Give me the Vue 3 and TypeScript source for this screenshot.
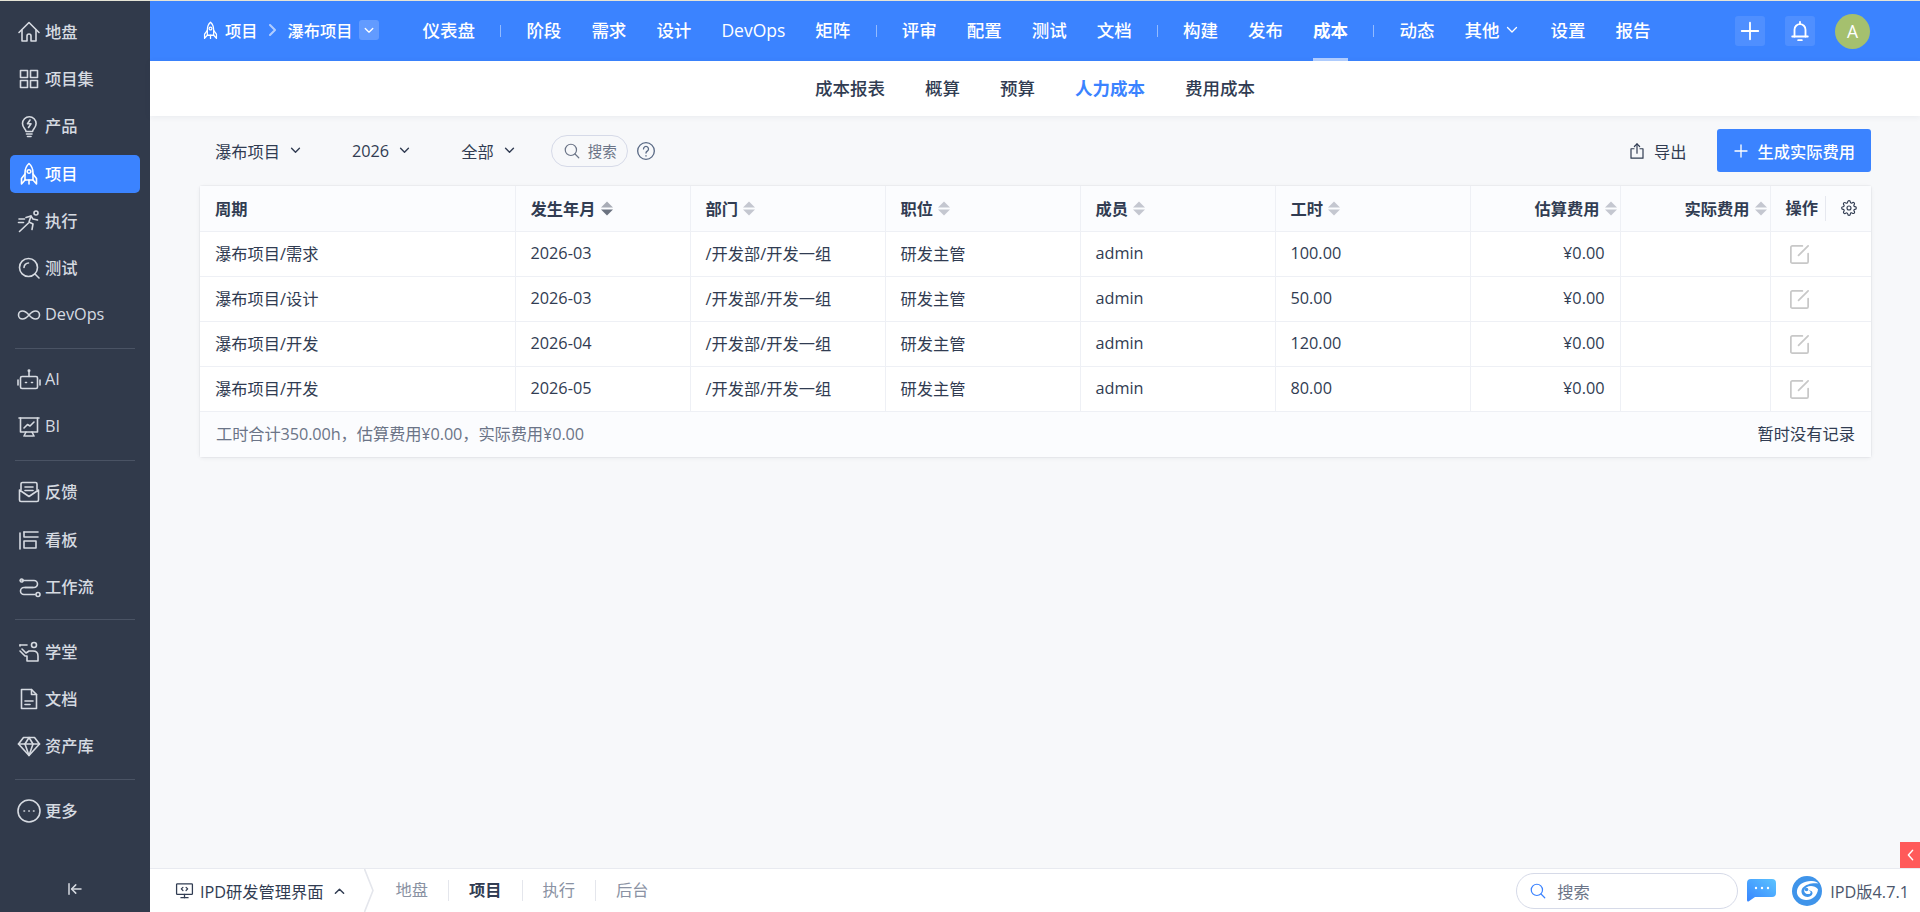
<script setup lang="ts">
interface SideItem {
  label: string
  icon: string
  active?: boolean
}

const icons: Record<string, string[]> = {
  home: ['M2 12.5 12 2.5l10 10', 'M5 10v11h5v-5a2 2 0 0 1 4 0v5h5V10'],
  apps: ['M3.5 3.5h7v7h-7z', 'M13.5 3.5h7v7h-7z', 'M3.5 13.5h7v7h-7z', 'M13.5 13.5h7v7h-7z'],
  bulb: ['M9 17.5c0-2.5-3.5-3.5-3.5-8a6.8 6.8 0 0 1 13.6 0c0 4.5-3.5 5.5-3.5 8z', 'M9.5 20h5.5', 'M10.5 22.5H14', 'M13 6l-2.5 3.8H14l-2.5 3.7'],
  rocket: ['M12 1.5c2.5 2.2 4 5.5 4 9.5v7H8v-7c0-4 1.500-7.300 4-9.500z', 'M8 12l-3.500 4.500V22L8 18', 'M16 12l3.500 4.500V22L16 18', 'M13.800 9.500a1.800 1.800 0 1 1-3.600 0 1.800 1.800 0 0 1 3.600 0z', 'M12 18v4'],
  run: ['M21 4a2 2 0 1 1-4 0 2 2 0 0 1 4 0z', 'M9 8.500l5-1.500 2 3 4.500 1', 'M14 7l-2 6 4 2-1 5.500', 'M11.500 14 2.500 22.500', 'M2 10h5.500', 'M1.500 13.500h5'],
  test: ['M20.500 11.500a9 9 0 1 1-18 0 9 9 0 0 1 18 0z', 'M18 18l4 4', 'M7 11.500a4.500 4.500 0 0 1 4.500-4.500'],
  loop: ['M12 12c-2.500-3-4.500-4-6.500-4a4 4 0 0 0 0 8c2 0 4-1 6.500-4s4.500-4 6.500-4a4 4 0 0 1 0 8c-2 0-4-1-6.500-4z'],
  robot: ['M5 8.500h14a1.500 1.500 0 0 1 1.500 1.500v9a1.500 1.500 0 0 1-1.500 1.500H5A1.500 1.500 0 0 1 3.500 19v-9A1.500 1.500 0 0 1 5 8.500z', 'M12 8.500V4', 'M1 12v5', 'M23 12v5', 'M8.500 14.500h1', 'M14.500 14.500h1', 'M12.700 2.800a.7.7 0 1 1-1.400 0 .7.7 0 0 1 1.400 0z'],
  chart: ['M2 3h20', 'M3.500 3v14h17V3', 'M7 21l2-4', 'M17 21l-2-4', 'M7 13l3.500-3.500 2.500 1.500 4-4', 'M8 21h8'],
  mail: ['M4 9.500V4a1.500 1.500 0 0 1 1.500-1.500h13A1.500 1.500 0 0 1 20 4v5.500', 'M2.500 10v10a1.500 1.500 0 0 0 1.500 1.500h16a1.500 1.500 0 0 0 1.500-1.500V10L12 16.500z', 'M8 7h8', 'M8 10.500h8'],
  board: ['M3 5v16', 'M7 4h14', 'M7 4v5h14', 'M7 13h12v7H7z'],
  flow: ['M5 5.500h12a3.500 3.500 0 0 1 0 7H7a3.500 3.500 0 0 0 0 7h11', 'M3.500 4.500a1.500 1.500 0 1 1 0 2 1.500 1.500 0 0 1 0-2z', 'M8 12.500h8', 'M23 19.500a2 2 0 1 1-4 0 2 2 0 0 1 4 0z'],
  teach: ['M19.500 5a2.500 2.500 0 1 1-5 0 2.500 2.500 0 0 1 5 0z', 'M3 5h7', 'M3 11l5 5h2v5h11v-5c0-3-2-5-5-5h-4l-3 2-4-4', 'M3 5v1'],
  doc: ['M4.500 2.500h10l5 5v14h-15z', 'M14.500 2.500v5h5', 'M8 14h8', 'M8 17.500h5'],
  gem: ['M6.500 3.500h11l5 6.500L12 21.500 1.500 10z', 'M1.500 10h21', 'M8 10l4 11.500L16 10', 'M8 10l4-6.500 4 6.500'],
  more: ['M23 12a11 11 0 1 1-22 0 11 11 0 0 1 22 0z', 'M7 12h.5', 'M11.800 12h.5', 'M16.500 12h.5'],
  search: ['M18 10.500a7.500 7.500 0 1 1-15 0 7.500 7.500 0 0 1 15 0z', 'M16 16l5 5'],
  monitor: ['M3 3.500h18a1 1 0 0 1 1 1V16a1 1 0 0 1-1 1H3a1 1 0 0 1-1-1V4.500a1 1 0 0 1 1-1z', 'M12 17v4', 'M7.500 21h9', 'M10 8l-2 2 2 2', 'M14 8l2 2-2 2'],
  bell: ['M6 18V10.500a6 6 0 0 1 12 0V18', 'M3.500 18h17', 'M10 22h4', 'M12 2v2.500'],
  share: ['M8 9H4v12.500h16V9h-4', 'M12 15V2.500', 'M8.500 6 12 2.500 15.500 6'],
  edit: ['M21 11v8.500a1.500 1.500 0 0 1-1.500 1.500h-15A1.500 1.500 0 0 1 3 19.500v-15A1.500 1.500 0 0 1 4.500 3H15', 'M11 13 21 3'],
  gear: ['M19.400 15a1.650 1.650 0 0 0 .33 1.820l.06.06a2 2 0 0 1 0 2.830 2 2 0 0 1-2.830 0l-.06-.06a1.650 1.650 0 0 0-1.820-.33 1.650 1.650 0 0 0-1 1.510V21a2 2 0 0 1-2 2 2 2 0 0 1-2-2v-.09A1.650 1.650 0 0 0 9 19.400a1.650 1.650 0 0 0-1.820.33l-.06.06a2 2 0 0 1-2.830 0 2 2 0 0 1 0-2.830l.06-.06a1.650 1.650 0 0 0 .33-1.820 1.650 1.650 0 0 0-1.510-1H3a2 2 0 0 1-2-2 2 2 0 0 1 2-2h.09A1.650 1.650 0 0 0 4.600 9a1.650 1.650 0 0 0-.33-1.820l-.06-.06a2 2 0 0 1 0-2.830 2 2 0 0 1 2.830 0l.06.06a1.650 1.650 0 0 0 1.820.33H9a1.650 1.650 0 0 0 1-1.510V3a2 2 0 0 1 2-2 2 2 0 0 1 2 2v.09a1.650 1.650 0 0 0 1 1.510 1.650 1.650 0 0 0 1.820-.33l.06-.06a2 2 0 0 1 2.830 0 2 2 0 0 1 0 2.830l-.06.06a1.650 1.650 0 0 0-.33 1.820V9a1.650 1.650 0 0 0 1.510 1H21a2 2 0 0 1 2 2 2 2 0 0 1-2 2h-.09a1.650 1.650 0 0 0-1.510 1z', 'M15 12a3 3 0 1 1-6 0 3 3 0 0 1 6 0z'],
  help: ['M22 12a10 10 0 1 1-20 0 10 10 0 0 1 20 0z', 'M9 9.500a3 3 0 1 1 4.500 2.600c-1 .6-1.500 1.200-1.500 2.400', 'M12 17.500v.5'],
  collapse: ['M4 5v14', 'M20 12H8', 'M13 6.500 7.500 12l5.500 5.500']
}

const sideGroups: SideItem[][] = [
  [
    { label: '地盘', icon: 'home' },
    { label: '项目集', icon: 'apps' },
    { label: '产品', icon: 'bulb' },
    { label: '项目', icon: 'rocket', active: true },
    { label: '执行', icon: 'run' },
    { label: '测试', icon: 'test' },
    { label: 'DevOps', icon: 'loop' }
  ],
  [
    { label: 'AI', icon: 'robot' },
    { label: 'BI', icon: 'chart' }
  ],
  [
    { label: '反馈', icon: 'mail' },
    { label: '看板', icon: 'board' },
    { label: '工作流', icon: 'flow' }
  ],
  [
    { label: '学堂', icon: 'teach' },
    { label: '文档', icon: 'doc' },
    { label: '资产库', icon: 'gem' }
  ],
  [{ label: '更多', icon: 'more' }]
]

const navGroups = [
  ['仪表盘'],
  ['阶段', '需求', '设计', 'DevOps', '矩阵'],
  ['评审', '配置', '测试', '文档'],
  ['构建', '发布', '成本'],
  ['动态']
]

const subNav = ['成本报表', '概算', '预算', '人力成本', '费用成本']

const columns = [
  { title: '周期', width: 315, sort: false },
  { title: '发生年月', width: 175, sort: true, current: true },
  { title: '部门', width: 195, sort: true },
  { title: '职位', width: 195, sort: true },
  { title: '成员', width: 195, sort: true },
  { title: '工时', width: 195, sort: true },
  { title: '估算费用', width: 150, sort: true, right: true },
  { title: '实际费用', width: 150, sort: true, right: true }
]

const rows = [
  { period: '瀑布项目/需求', month: '2026-03', hours: '100.00' },
  { period: '瀑布项目/设计', month: '2026-03', hours: '50.00' },
  { period: '瀑布项目/开发', month: '2026-04', hours: '120.00' },
  { period: '瀑布项目/开发', month: '2026-05', hours: '80.00' }
]

const filters = ['瀑布项目', '2026', '全部']
const bottomTabs = ['地盘', '项目', '执行', '后台']
</script>

<template>
  <div class="page">
    <div class="top-strip"></div>
    <div class="shell">
      <aside class="sidebar">
        <template v-for="(group, g) in sideGroups" :key="g">
          <div v-if="g > 0" class="side-sep"></div>
          <div class="side-group">
            <a v-for="item in group" :key="item.label" class="side-item" :class="{ active: item.active }">
              <svg class="side-icon" viewBox="0 0 24 24">
                <path v-for="d in icons[item.icon]" :key="d" :d="d" />
              </svg>
              <span>{{ item.label }}</span>
            </a>
          </div>
        </template>
        <div class="side-collapse">
          <svg class="collapse-icon" viewBox="0 0 24 24">
            <path v-for="d in icons.collapse" :key="d" :d="d" />
          </svg>
        </div>
      </aside>

      <div class="main">
        <header class="header">
          <div class="crumb">
            <svg class="crumb-rocket" viewBox="0 0 24 24">
              <path v-for="d in icons.rocket" :key="d" :d="d" />
            </svg>
            <span class="crumb-root">项目</span>
            <svg class="crumb-arrow" viewBox="0 0 10 14"><path d="M2 2l5 5-5 5" /></svg>
            <span>瀑布项目</span>
            <span class="crumb-drop">
              <svg viewBox="0 0 12 8"><path d="M1.500 1.500 6 6l4.500-4.500" /></svg>
            </span>
          </div>
          <nav class="nav">
            <template v-for="(group, g) in navGroups" :key="g">
              <i v-if="g > 0" class="nav-sep"></i>
              <a v-for="label in group" :key="label" class="nav-item" :class="{ active: label === '成本' }">{{ label }}</a>
            </template>
            <a class="nav-item nav-more">
              其他
              <svg viewBox="0 0 12 8"><path d="M1.500 1.500 6 6l4.500-4.500" /></svg>
            </a>
            <a class="nav-item">设置</a>
            <a class="nav-item">报告</a>
          </nav>
          <div class="header-tools">
            <span class="tool-box">
              <svg viewBox="0 0 24 24"><path d="M12 3v18M3 12h18" /></svg>
            </span>
            <span class="tool-box">
              <svg viewBox="0 0 24 24"><path v-for="d in icons.bell" :key="d" :d="d" /></svg>
            </span>
            <span class="avatar">A</span>
          </div>
        </header>

        <div class="subnav">
          <a v-for="label in subNav" :key="label" class="subnav-item" :class="{ active: label === '人力成本' }">{{ label }}</a>
        </div>

        <main class="content">
          <div class="toolbar">
            <a v-for="label in filters" :key="label" class="filter">
              {{ label }}
              <svg viewBox="0 0 12 8"><path d="M1.500 1.500 6 6l4.500-4.500" /></svg>
            </a>
            <div class="search-pill">
              <svg viewBox="0 0 24 24"><path v-for="d in icons.search" :key="d" :d="d" /></svg>
              <span>搜索</span>
            </div>
            <svg class="help" viewBox="0 0 24 24"><path v-for="d in icons.help" :key="d" :d="d" /></svg>
            <a class="export">
              <svg viewBox="0 0 24 24"><path v-for="d in icons.share" :key="d" :d="d" /></svg>
              导出
            </a>
            <button class="primary" type="button">
              <svg viewBox="0 0 24 24"><path d="M12 3v18M3 12h18" /></svg>
              生成实际费用
            </button>
          </div>

          <div class="card">
            <table class="grid">
              <colgroup>
                <col v-for="c in columns" :key="c.title" :style="{ width: c.width + 'px' }" />
                <col />
              </colgroup>
              <thead>
                <tr>
                  <th v-for="c in columns" :key="c.title" :class="{ right: c.right }">
                    <span class="th-inner">
                      {{ c.title }}
                      <svg v-if="c.sort" class="sort" :class="{ current: c.current }" viewBox="0 0 12 15">
                        <path class="up" d="M6 0.500 12 6.500H0z" />
                        <path class="down" d="M0 8.500h12l-6 6z" />
                      </svg>
                    </span>
                  </th>
                  <th class="actions-head">
                    <span class="actions-inner">
                      <span class="actions-title">操作</span>
                      <svg viewBox="0 0 24 24"><path v-for="d in icons.gear" :key="d" :d="d" /></svg>
                    </span>
                  </th>
                </tr>
              </thead>
              <tbody>
                <tr v-for="(r, i) in rows" :key="i">
                  <td>{{ r.period }}</td>
                  <td>{{ r.month }}</td>
                  <td>/开发部/开发一组</td>
                  <td>研发主管</td>
                  <td>admin</td>
                  <td>{{ r.hours }}</td>
                  <td class="right">¥0.00</td>
                  <td class="right"></td>
                  <td class="action-cell">
                    <svg viewBox="0 0 24 24"><path v-for="d in icons.edit" :key="d" :d="d" /></svg>
                  </td>
                </tr>
              </tbody>
            </table>
            <div class="card-foot">
              <span class="summary">工时合计350.00h，估算费用¥0.00，实际费用¥0.00</span>
              <span>暂时没有记录</span>
            </div>
          </div>
        </main>

        <footer class="bottom">
          <div class="bottom-menu">
            <svg viewBox="0 0 24 24"><path v-for="d in icons.monitor" :key="d" :d="d" /></svg>
            <span>IPD研发管理界面</span>
            <svg class="bottom-chevron" viewBox="0 0 12 8"><path d="M1.500 6.500 6 2l4.500 4.500" /></svg>
          </div>
          <svg class="bottom-wedge" viewBox="0 0 10 43"><path d="M0.500 0 9 21.500 0.500 43" /></svg>
          <div class="bottom-tabs">
            <a v-for="t in bottomTabs" :key="t" class="bottom-tab" :class="{ active: t === '项目' }">{{ t }}</a>
          </div>
          <div class="bottom-right">
            <div class="bottom-search">
              <svg viewBox="0 0 24 24"><path v-for="d in icons.search" :key="d" :d="d" /></svg>
              <span>搜索</span>
            </div>
            <svg class="chat" viewBox="0 0 29 23">
              <defs>
                <linearGradient id="chatFill" x1="0" y1="1" x2="1" y2="0">
                  <stop offset="0" stop-color="#3785ff" />
                  <stop offset="1" stop-color="#5cc4ff" />
                </linearGradient>
              </defs>
              <path d="M4 0h21a4 4 0 0 1 4 4v10a4 4 0 0 1-4 4H8L1.500 22.500Q0 23 0 21V4a4 4 0 0 1 4-4z" fill="url(#chatFill)" />
              <circle cx="9" cy="9" r="1.200" fill="#fff" />
              <circle cx="15" cy="9" r="1.200" fill="#fff" />
              <circle cx="21" cy="9" r="1.200" fill="#fff" />
            </svg>
            <svg class="logo" viewBox="0 0 30 30">
              <circle cx="15" cy="15" r="15" fill="#3f94ea" />
              <path d="M5 14.500C6 8 13 4.500 20 5c3 .2 5 1.200 6.500 2.500C22 6.500 14 7.500 10.500 12c-2 3-1 7 2.500 8.500 3 1.200 7-.2 7.500-3 .3-2-2-3.500-4-2.800 1.800 0 2.500 1.200 2 2.200-.8 1.500-3.500 1.500-5 .3-2-1.500-1.500-4.500 1-6 3.500-2 8.500-1.500 11.500 2-.5 6.500-6 11-12 10.800C9 24 4 20 5 14.500z" fill="#fff" />
              <circle cx="14.500" cy="13.500" r="1.800" fill="#3f94ea" />
            </svg>
            <span class="version">IPD版4.7.1</span>
          </div>
        </footer>
      </div>
    </div>
    <div class="red-tab">
      <svg viewBox="0 0 8 14"><path d="M6.500 1.500 1.500 7l5 5.500" /></svg>
    </div>
  </div>
</template>

<style scoped>
.page {
  position: relative;
  display: flex;
  flex-direction: column;
  height: 100vh;
  overflow: hidden;
  font-family: "Open Sans", "Noto Sans CJK SC", sans-serif;
  font-size: 16.25px;
  color: #313c52;
}

svg {
  display: block;
  flex: none;
  fill: none;
  stroke: currentColor;
  stroke-width: 1.6;
  stroke-linecap: round;
  stroke-linejoin: round;
}

a {
  cursor: pointer;
}

.top-strip {
  height: 1px;
  flex: none;
  background: #e6e4d6;
}

.shell {
  display: flex;
  flex: 1;
  min-height: 0;
}

/* left rail */
.sidebar {
  width: 150px;
  flex: none;
  display: flex;
  flex-direction: column;
  padding-top: 12px;
  background: #313a4b;
  color: #d6dae1;
}

.side-group {
  display: flex;
  flex-direction: column;
  gap: 9.2px;
  padding: 0 10px;
}

.side-sep {
  height: 1px;
  flex: none;
  margin: 13.5px 15px 12.5px;
  background: #4a5364;
}

.side-item {
  display: flex;
  align-items: center;
  height: 38px;
  flex: none;
  padding-left: 7px;
  border-radius: 5px;
  font-weight: 500;
}

.side-item span {
  padding-bottom: 2px;
}

.side-item.active {
  background: #3b83ff;
  color: #fff;
}

.side-icon {
  width: 24px;
  height: 24px;
  margin-right: 4px;
}

.side-collapse {
  display: flex;
  justify-content: center;
  margin-top: auto;
  padding-bottom: 14px;
}

.collapse-icon {
  width: 18px;
  height: 18px;
  stroke-width: 2;
}

.main {
  flex: 1;
  min-width: 0;
  display: flex;
  flex-direction: column;
  background: #f7f8fa;
}

/* blue bar */
.header {
  display: flex;
  align-items: center;
  height: 60px;
  flex: none;
  padding: 0 50px 0 51px;
  background: #3b83ff;
  color: #fff;
}

.crumb {
  display: flex;
  align-items: center;
  padding-bottom: 2px;
  font-weight: 500;
}

.crumb-rocket {
  width: 19px;
  height: 19px;
  margin-right: 5px;
}

.crumb-arrow {
  width: 10px;
  height: 14px;
  margin: 0 10px;
  opacity: 0.6;
  stroke-width: 2;
}

.crumb-drop {
  display: flex;
  align-items: center;
  justify-content: center;
  width: 20px;
  height: 20px;
  margin-left: 6px;
  border-radius: 3px;
  background: rgba(255, 255, 255, 0.2);
}

.crumb-drop svg {
  width: 10px;
  height: 7px;
}

.nav {
  display: flex;
  align-items: center;
  margin-left: 29px;
  font-size: 17.5px;
  font-weight: 500;
}

.nav-item {
  position: relative;
  display: flex;
  align-items: center;
  height: 60px;
  padding: 0 15px 3px;
  box-sizing: border-box;
  white-space: nowrap;
}

.nav-item.active {
  font-weight: 700;
}

.nav-item.active::after {
  content: "";
  position: absolute;
  left: 15px;
  right: 15px;
  bottom: 0;
  height: 3px;
  background: rgba(255, 255, 255, 0.6);
}

.nav-more {
  padding-right: 17px;
}

.nav-more svg {
  width: 12px;
  height: 8px;
  margin-left: 7px;
  stroke-width: 1.3;
}

.nav-sep {
  width: 1px;
  height: 12px;
  margin: 0 10.2px;
  background: rgba(255, 255, 255, 0.45);
}

.header-tools {
  display: flex;
  align-items: center;
  margin-left: auto;
}

.tool-box {
  display: flex;
  align-items: center;
  justify-content: center;
  width: 30px;
  height: 30px;
  margin-right: 20px;
  border-radius: 3px;
  background: rgba(255, 255, 255, 0.1);
}

.tool-box svg {
  width: 22px;
  height: 22px;
  stroke-width: 2;
}

.avatar {
  display: flex;
  align-items: center;
  justify-content: center;
  width: 35px;
  height: 35px;
  border-radius: 50%;
  background: #a5c06e;
  font-size: 17.5px;
}

/* second bar */
.subnav {
  display: flex;
  align-items: center;
  justify-content: center;
  gap: 40px;
  height: 55px;
  flex: none;
  box-sizing: border-box;
  padding-bottom: 2px;
  background: #fff;
  box-shadow: 0 1px 6px rgba(49, 60, 82, 0.07);
  font-size: 17.5px;
  font-weight: 500;
}

.subnav-item.active {
  color: #3b83ff;
  font-weight: 700;
}

.content {
  flex: 1;
  min-height: 0;
  padding: 13px 49px 0 50px;
}

.toolbar {
  display: flex;
  align-items: center;
  height: 43px;
  padding-left: 15px;
}

.filter {
  display: flex;
  align-items: center;
  margin-right: 51px;
}

.filter svg {
  width: 11px;
  height: 7px;
  margin-left: 10px;
}

.filter:nth-child(3) {
  margin-right: 36px;
}

.search-pill {
  display: flex;
  align-items: center;
  width: 77px;
  height: 32px;
  box-sizing: border-box;
  padding-left: 11px;
  border: 1px solid #d6dae8;
  border-radius: 16px;
  color: #6b7487;
  font-size: 14.5px;
}

.search-pill svg {
  width: 18px;
  height: 18px;
  margin-right: 7px;
}

.help {
  width: 20px;
  height: 20px;
  margin-left: 8px;
  color: #5a6a85;
}

.export {
  display: flex;
  align-items: center;
  margin-left: auto;
  margin-right: 30px;
}

.export svg {
  width: 18px;
  height: 18px;
  margin-right: 8px;
}

.primary {
  display: flex;
  align-items: center;
  height: 43px;
  padding: 0 16px;
  border: 0;
  border-radius: 3px;
  background: #3b83ff;
  color: #fff;
  font: inherit;
  font-weight: 500;
}

.primary svg {
  width: 16px;
  height: 16px;
  margin-right: 9px;
  stroke-width: 2;
}

/* table */
.card {
  margin-top: 14px;
  border-radius: 3px;
  background: #fff;
  box-shadow: 0 0 0 1px rgba(49, 60, 82, 0.04), 0 1px 4px rgba(49, 60, 82, 0.08);
}

.grid {
  width: 100%;
  border-collapse: collapse;
  table-layout: fixed;
}

.grid th,
.grid td {
  height: 45px;
  padding: 0 15px 2px;
  border-right: 1px solid #eef0f5;
  border-bottom: 1px solid #eef0f5;
  text-align: left;
  white-space: nowrap;
  box-sizing: border-box;
}

.grid th:last-child,
.grid td:last-child {
  border-right: 0;
}

.grid th {
  padding-bottom: 0;
  background: #fbfcfe;
  font-weight: 700;
}

.grid th.right {
  padding-right: 3px;
  text-align: right;
}

.grid td.right {
  text-align: right;
}

.th-inner {
  display: inline-flex;
  align-items: center;
}

.sort {
  width: 12px;
  height: 15px;
  margin-left: 5px;
  stroke: none;
}

.sort .up,
.sort .down {
  fill: #c4c7d0;
}

.sort.current .up {
  fill: #a8acb6;
}

.sort.current .down {
  fill: #6b7280;
}

.grid th.actions-head {
  padding: 0 0 0 15px;
}

.actions-inner {
  display: flex;
  align-items: center;
}

.actions-title {
  padding-right: 7px;
  border-right: 1px solid #e6e8ef;
  line-height: 25px;
}

.actions-inner svg {
  width: 16px;
  height: 16px;
  margin-left: 15px;
  stroke-width: 1.7;
}

.grid .action-cell {
  padding-bottom: 0;
}

.action-cell svg {
  width: 23px;
  height: 23px;
  margin: 1px 0 0 2px;
  color: #c8c8c8;
  stroke-width: 1.8;
}

.card-foot {
  display: flex;
  align-items: center;
  justify-content: space-between;
  height: 45px;
  box-sizing: border-box;
  padding: 0 16px 2px;
  background: #fbfcfe;
}

.summary {
  color: #6b7487;
  letter-spacing: -0.1px;
}

/* bottom bar */
.bottom {
  display: flex;
  align-items: center;
  height: 43px;
  flex: none;
  padding-left: 25px;
  border-top: 1px solid #e8eaf0;
  background: #fff;
}

.bottom-menu {
  display: flex;
  align-items: center;
}

.bottom-menu svg {
  width: 19px;
  height: 19px;
  margin-right: 6px;
}

.bottom-menu .bottom-chevron {
  width: 11px;
  height: 8px;
  margin: 0 0 0 10px;
}

.bottom-wedge {
  width: 10px;
  height: 43px;
  margin-left: 19px;
  color: #e4e6ec;
}

.bottom-tabs {
  display: flex;
  align-items: center;
  margin-left: 22px;
  color: #8a92a3;
}

.bottom-tab {
  padding-right: 20px;
  margin-right: 20px;
  border-right: 1px solid #e4e6ec;
  line-height: 21px;
}

.bottom-tab:last-child {
  border-right: 0;
}

.bottom-tab.active {
  color: #313c52;
  font-weight: 700;
}

.bottom-right {
  display: flex;
  align-items: center;
  margin-left: auto;
  padding-right: 11px;
}

.bottom-search {
  display: flex;
  align-items: center;
  width: 222px;
  height: 36px;
  padding-left: 12px;
  box-sizing: border-box;
  border: 1px solid #d6dae8;
  border-radius: 18px;
  color: #6b7487;
}

.bottom-search svg {
  width: 18px;
  height: 18px;
  margin-right: 10px;
  color: #3b83ff;
}

.chat {
  width: 29px;
  height: 23px;
  margin-left: 9px;
  stroke: none;
}

.logo {
  width: 30px;
  height: 30px;
  margin-left: 16px;
  stroke: none;
}

.version {
  margin-left: 8px;
  color: #4c566b;
}

.red-tab {
  position: absolute;
  right: 0;
  bottom: 44px;
  display: flex;
  align-items: center;
  justify-content: center;
  width: 20px;
  height: 26px;
  background: #ff5a5a;
  color: #fff;
}

.red-tab svg {
  width: 7px;
  height: 12px;
}
</style>

<style>
html,
body {
  height: 100%;
  margin: 0;
  overflow: hidden;
}
</style>
